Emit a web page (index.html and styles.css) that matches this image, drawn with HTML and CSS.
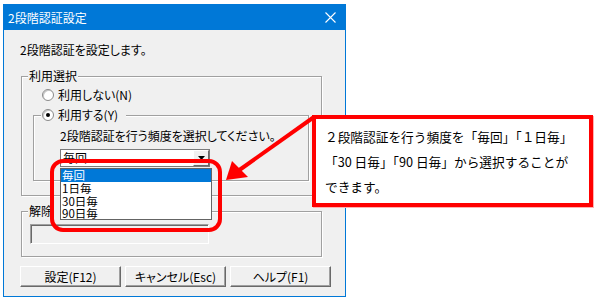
FILE: index.html
```html
<!DOCTYPE html>
<html lang="ja">
<head>
<meta charset="utf-8">
<link rel="stylesheet" href="styles.css">
</head>
<body>
<div class="dialog">
  <div class="titlebar">
    <span class="title">2段階認証設定</span>
    <svg class="close" width="11" height="11" viewBox="0 0 11 11"><path d="M0.5 0.5L10.5 10.5M10.5 0.5L0.5 10.5" stroke="#fff" stroke-width="1.1" fill="none"/></svg>
  </div>
  <div class="body">
    <div class="intro">2段階認証を設定します。</div>
    <div class="group g1">
      <div class="legend">利用選択</div>
      <div class="radio r1"><span class="circle"></span><span>利用しない(N)</span></div>
      <div class="group g-inner">
        <div class="legend radio rlegend"><span class="circle on"></span><span>利用する(Y)</span></div>
        <div class="hint">2段階認証を行う頻度を選択してください。</div>
        <div class="combo"><span class="combo-text">毎回</span><span class="combo-btn"><svg width="7" height="4" viewBox="0 0 7 4"><path d="M0 0H7L3.5 4Z" fill="#000"/></svg></span></div>
      </div>
    </div>
    <div class="group g2">
      <div class="legend">解除</div>
      <div class="textbox"></div>
    </div>
    <div class="buttons">
      <div class="btn">設定(F12)</div>
      <div class="btn">キャンセル(Esc)</div>
      <div class="btn">ヘルプ(F1)</div>
    </div>
  </div>
</div>

<div class="droplist">
  <div class="item sel">毎回</div>
  <div class="item">1日毎</div>
  <div class="item">30日毎</div>
  <div class="item">90日毎</div>
</div>
<div class="highlight"></div>
<svg class="arrow" width="607" height="300" viewBox="0 0 607 300">
  <line x1="314" y1="117" x2="238" y2="171" stroke="#ff0000" stroke-width="4"/>
  <polygon points="226,180 232,161 248,177" fill="#ff0000"/>
</svg>
<div class="callout">
  <div class="line">２段階認証を行う頻度を「毎回」「１日毎」</div>
  <div class="line">「30 日毎」「90 日毎」から選択することが</div>
  <div class="line">できます。</div>
</div>
</body>
</html>
```
FILE: styles.css
```css
* { box-sizing: border-box; }
html, body { margin: 0; padding: 0; background: #fff; }
body {
  width: 607px; height: 300px; position: relative; overflow: hidden;
  font-family: "Noto Sans CJK JP", "Noto Sans", sans-serif;
  font-size: 12px; color: #000;
}
.dialog {
  margin: 4px 0 0 3px;
  width: 343px; height: 293px;
  border: 1px solid #0078d7;
  background: #f0f0f0;
  font-feature-settings: "palt";
}
.titlebar {
  height: 25px; background: #0078d7; color: #fff;
  display: flex; align-items: center; justify-content: space-between;
  padding: 0 9px 0 4px;
}
.title { line-height: 14px; }
.close { display: block; }
.body { padding: 0 0 0 16px; }
.intro { margin-top: 13px; line-height: 14px; height: 14px; }
.group {
  border: 1px solid #a0a0a0;
  box-shadow: inset 1px 1px 0 #fff, 1px 1px 0 #fff;
}
.legend {
  width: fit-content; height: 14px; line-height: 14px;
  margin: -8px 0 0 6px; padding: 0 1px;
  background: #f0f0f0;
}
.g1 { margin: 19px 0 0 1px; width: 301px; height: 120px; }
.radio { display: flex; align-items: center; height: 14px; line-height: 14px; }
.circle {
  width: 12px; height: 12px; border-radius: 50%;
  border: 1px solid #8a8a8a; background: #fff;
  box-shadow: inset 1px 1px 0 #c8c8c8;
  margin-right: 4px; flex: none;
  display: flex; align-items: center; justify-content: center;
}
.circle.on::after {
  content: ""; width: 4px; height: 4px; border-radius: 50%; background: #000;
}
.r1 { margin: 5px 0 0 20px; }
.g-inner { margin: 13px 0 0 11px; width: 276px; height: 66px; }
.rlegend { margin-left: 7px; padding: 0 8px 0 1px; }
.hint { margin: 7px 0 0 26px; line-height: 14px; height: 14px; }
.combo {
  margin: 6px 0 0 26px; width: 150px; height: 18px;
  border: 1px solid #7a7a7a; background: #fff;
  display: flex; justify-content: space-between; align-items: stretch;
}
.combo-text { line-height: 16px; padding-left: 2px; font-feature-settings: normal; }
.combo-btn {
  width: 16px; background: #f0f0f0;
  border: 1px solid; border-color: #fff #696969 #696969 #fff;
  display: flex; align-items: center; justify-content: center;
}
.g2 { margin: 15px 0 0 1px; width: 301px; height: 46px; }
.g2 .legend { padding-right: 10px; }
.textbox {
  margin: 6px 0 0 8px; width: 179px; height: 20px;
  border: 1px solid; border-color: #a0a0a0 #fff #fff #a0a0a0;
  box-shadow: inset 1px 1px 0 #696969;
  background: #f0f0f0;
}
.buttons { display: flex; gap: 4px; margin-top: 9px; }
.btn {
  width: 101px; height: 21px; line-height: 19px; text-align: center;
  border: 1px solid; border-color: #fff #696969 #696969 #fff;
  box-shadow: inset -1px -1px 0 #a0a0a0;
  background: #f0f0f0;
}
.droplist {
  position: absolute; left: 60px; top: 168px; width: 152px; height: 52px;
  border: 1px solid #646464; background: #fff;
}
.item { height: 12.5px; line-height: 12.5px; padding-left: 1px; font-size: 11.5px; }
.item.sel { background: #0078d7; color: #fff; height: 13px; line-height: 13px; }
.highlight {
  position: absolute; left: 50px; top: 159px; width: 172px; height: 73px;
  border: 4px solid #ff0000; border-radius: 13px;
}
.arrow { position: absolute; left: 0; top: 0; pointer-events: none; }
.callout {
  position: absolute; left: 312px; top: 115px; width: 281px; height: 92px;
  border: 4px solid #ff0000; background: #fff;
  padding: 5px 0 0 9px;
  box-shadow: 1px 1px 0 #ffb0b0;
  font-size: 12.7px;
}
.line { height: 25px; line-height: 25px; white-space: nowrap; }
```
